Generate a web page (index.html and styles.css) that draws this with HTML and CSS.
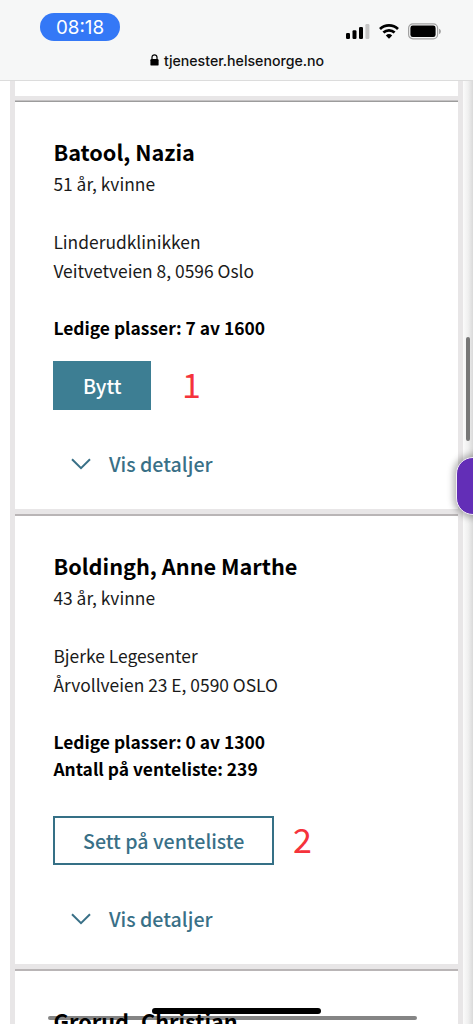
FILE: index.html
```html
<!DOCTYPE html>
<html lang="no">
<head>
<meta charset="utf-8">
<title>Bytt fastlege</title>
<link rel="stylesheet" href="styles.css">
</head>
<body>
<div class="screen">
  <header class="browser-bar">
    <div class="status">
      <span class="time">08:18</span>
      <div class="indicators">
        <svg class="signal" width="24" height="16" viewBox="0 0 24 16"><rect x="0" y="10" width="4" height="6" rx="1.2"/><rect x="6.5" y="7.2" width="4" height="8.8" rx="1.2"/><rect x="13" y="4" width="4" height="12" rx="1.2"/><rect x="19.4" y="1" width="4" height="15" rx="1.2" fill="#c5c5c5"/></svg>
        <svg class="wifi" width="20" height="16" viewBox="0 0 20 16"><g fill="none" stroke="#000" stroke-width="2.7"><path d="M1 6a13 13 0 0 1 18 0"/><path d="M4.4 9.6a8.1 8.1 0 0 1 11.2 0"/></g><path d="M6.8 12.4a4.7 4.7 0 0 1 6.4 0L10 15.7z"/></svg>
        <svg class="battery" width="33" height="17" viewBox="0 0 33 17"><rect x=".6" y=".8" width="29" height="15" rx="4.3" fill="none" stroke="#a2a2a2" stroke-width="1.2"/><rect x="2.4" y="2.6" width="25.2" height="11.4" rx="2.3"/><path d="M31 5.8c2.5 1 2.5 4.2 0 5.2z" fill="#a2a2a2"/></svg>
      </div>
    </div>
    <div class="address-bar">
      <svg width="9" height="12" viewBox="0 0 9 12"><path d="M2 5.5V3.3a2.5 2.5 0 0 1 5 0v2.2" fill="none" stroke="#000" stroke-width="1.2"/><rect x=".4" y="5" width="8.2" height="6.6" rx="1.2"/></svg>
      <span class="host">tjenester.helsenorge.no</span>
    </div>
  </header>
  <div class="page">
    <main class="results">
      <div class="card-end"></div>
      <article class="card card-first">
        <h2 class="name">Batool, Nazia</h2>
        <p class="line">51 år, kvinne</p>
        <div class="clinic"><p class="line">Linderudklinikken</p><p class="line">Veitvetveien 8, 0596 Oslo</p></div>
        <div class="capacity"><p>Ledige plasser: 7 av 1600</p></div>
        <div class="action"><button class="btn btn-primary">Bytt</button><span class="note">1</span></div>
        <a class="details"><svg width="20" height="12" viewBox="0 0 20 12"><path d="M1 1.2l9 9 9-9"/></svg><span>Vis detaljer</span></a>
      </article>
      <article class="card">
        <h2 class="name">Boldingh, Anne Marthe</h2>
        <p class="line">43 år, kvinne</p>
        <div class="clinic"><p class="line">Bjerke Legesenter</p><p class="line">Årvollveien 23 E, 0590 OSLO</p></div>
        <div class="capacity"><p>Ledige plasser: 0 av 1300</p><p>Antall på venteliste: 239</p></div>
        <div class="action action-wait"><button class="btn btn-outline">Sett på venteliste</button><span class="note">2</span></div>
        <a class="details"><svg width="20" height="12" viewBox="0 0 20 12"><path d="M1 1.2l9 9 9-9"/></svg><span>Vis detaljer</span></a>
      </article>
      <article class="card">
        <h2 class="name name-last">Grorud, Christian</h2>
      </article>
    </main>
    <div class="edge"></div>
  </div>
  <div class="scroll-v"></div>
  <div class="side-tab"></div>
  <div class="scroll-h"></div>
  <div class="home-indicator"></div>
</div>
</body>
</html>
```
FILE: styles.css
```css
* { box-sizing: border-box; }
body { margin: 0; }
h2, p { margin: 0; }
.screen {
  position: relative;
  width: 473px;
  height: 1024px;
  overflow: hidden;
  display: flex;
  flex-direction: column;
  background: #fff;
  font-family: "Noto Sans CJK JP", "Noto Sans", sans-serif;
  color: #1a1a1a;
}
.browser-bar {
  flex: none;
  height: 81px;
  padding: 13px 32px 0 40px;
  background: #f6f7f7;
  border-bottom: 1px solid #dcdcdc;
  font-family: Inter, "Liberation Sans", sans-serif;
}
.status { display: flex; justify-content: space-between; height: 28px; }
.time {
  width: 80px;
  height: 28px;
  border-radius: 14px;
  background: #3478f6;
  color: #fff;
  font-size: 18.8px;
  line-height: 29px;
  text-align: center;
}
.indicators { display: flex; padding-top: 10px; }
.signal { margin-right: 9px; }
.battery { margin-left: 9px; }
.indicators svg { flex: none; }
.address-bar {
  display: flex;
  align-items: center;
  gap: 5px;
  height: 20px;
  margin: 9px 0 0 110px;
  color: #111;
  font-size: 14.15px;
  font-weight: 500;
  white-space: nowrap;
}
.page { display: flex; flex: 1; min-height: 0; padding-left: 10px; }
.results {
  width: 453px;
  border: solid #e8e6e7;
  border-width: 0 5px;
  flex: none;
}
.edge { flex: 1; background: linear-gradient(90deg, #fbfbfb, #f0f0f0 50%, #dadada); }
.card-end { height: 15px; }
.card {
  padding: 37px 38.4px 30.5px;
  border-top: 5px solid #e8e6e7;
  position: relative;
  white-space: nowrap;
}
.card-first { padding-top: 36px; }
.card::before {
  content: "";
  position: absolute;
  left: 0;
  right: 0;
  top: 0;
  height: 2px;
  background: #b9b5b6;
}
.card-first::before { top: -1px; background: linear-gradient(#c4c2c3 50%, #9c9c9c 50%); }
.name { margin-bottom: 2px; color: #000; font-size: 21.7px; line-height: 30px; font-weight: 700; }
.name-last { position: relative; z-index: 3; }
.line { font-size: 17.4px; line-height: 29px; }
.clinic { margin-top: 29px; }
.capacity { margin-top: 29px; color: #000; font-size: 17.4px; line-height: 27px; font-weight: 700; }
.action { display: flex; align-items: center; gap: 31px; height: 49px; margin-top: 20px; }
.action-wait { margin-top: 34px; gap: 19px; }
.btn {
  height: 48.5px;
  padding: 0 27.6px;
  border: 2px solid #357086;
  border-radius: 0;
  background: #fff;
  color: #397087;
  font: 500 19.6px/42px "Noto Sans CJK JP", "Noto Sans", sans-serif;
}
.btn-primary { border-color: #3d7e93; background: #3d7e93; color: #fff; }
.note { margin-top: -3px; color: #f5333b; font-size: 34px; line-height: 48px; }
.details {
  display: flex;
  align-items: center;
  gap: 17.5px;
  height: 30px;
  margin: 38.5px 0 0 18px;
  color: #397087;
  font-size: 19.6px;
  line-height: 30px;
  font-weight: 500;
}
.details path { fill: none; stroke: #397087; stroke-width: 2; }
.scroll-v { position: absolute; left: 465.5px; top: 337px; width: 4px; height: 104px; border-radius: 2px; background: #777; }
.side-tab {
  position: absolute;
  left: 456px;
  top: 457px;
  width: 40px;
  height: 58px;
  border: 1px solid #f3edf6;
  border-radius: 17px;
  background: #632eb7;
  box-shadow: 0 0 6px 3px rgba(0, 0, 0, .28);
}
.scroll-h { position: absolute; left: 48px; top: 1016px; width: 369px; height: 4px; border-radius: 2px; background: #858585; }
.home-indicator { position: absolute; left: 152px; top: 1008px; width: 169px; height: 6px; border-radius: 3px; background: #000; z-index: 4; }
```
